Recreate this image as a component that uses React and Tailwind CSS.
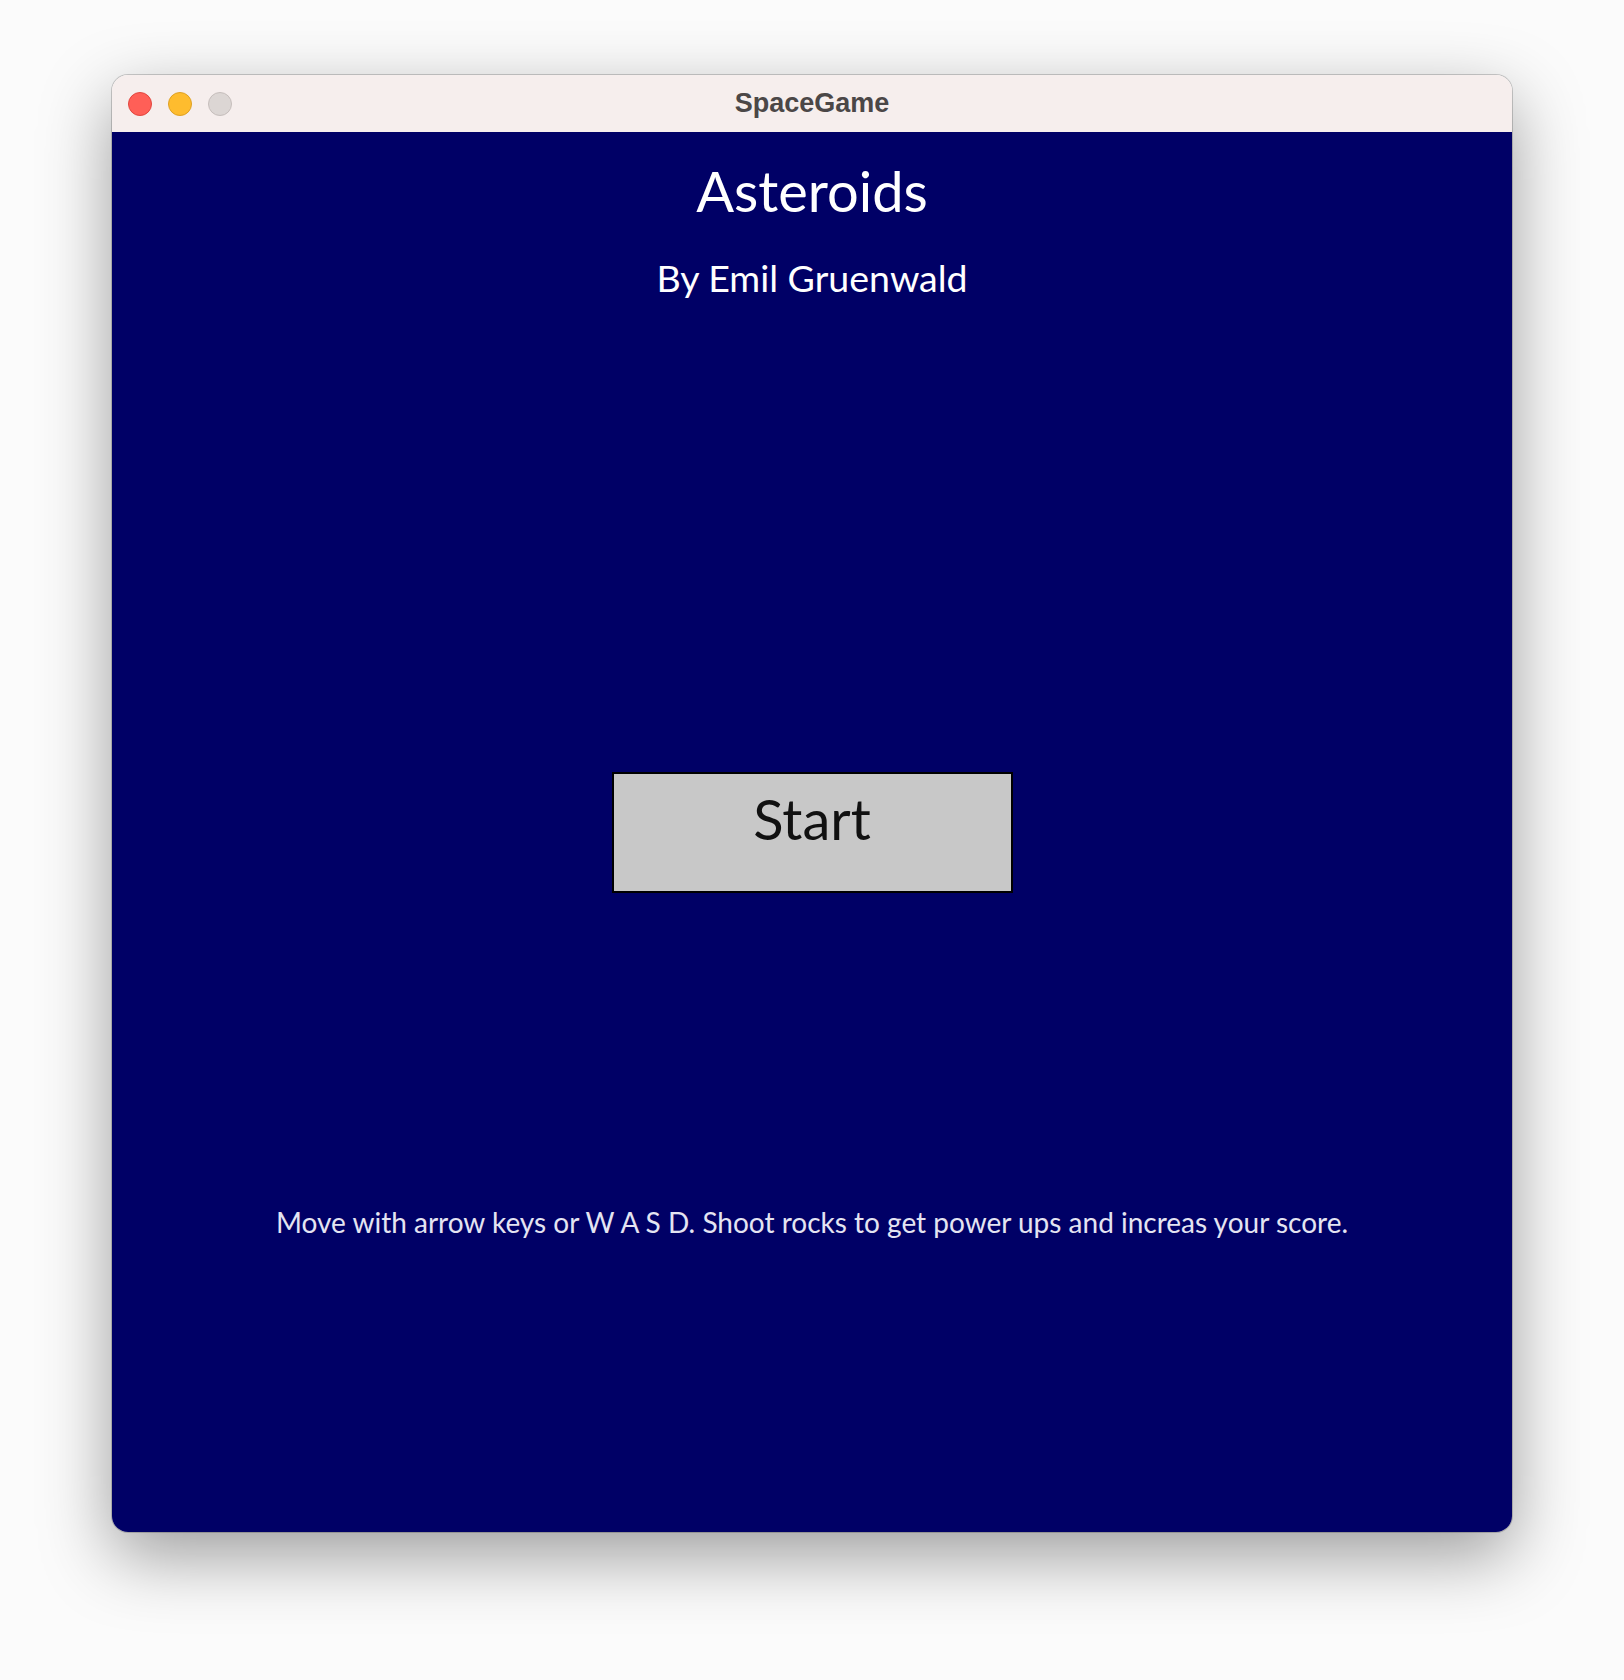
export default function App() {
  return (
    <div className="w-[1624px] h-[1680px] bg-[#fbfbfb] pt-[75px] pl-[112px]">
      {/* Window */}
      <div className="w-[1400px] rounded-[16px] overflow-hidden shadow-[0_24px_70px_rgba(0,0,0,0.38),0_0_0_1px_rgba(0,0,0,0.18)]">
        {/* Title bar */}
        <div className="h-[57px] bg-[#f6eeed] grid grid-cols-[1fr_auto_1fr] items-center">
          <div className="flex items-center gap-[16px] pl-[16px]">
            <span className="w-[24px] h-[24px] rounded-full bg-[#ff5f57] border border-[#e2463f]" />
            <span className="w-[24px] h-[24px] rounded-full bg-[#febc2e] border border-[#dfa123]" />
            <span className="w-[24px] h-[24px] rounded-full bg-[#dcd6d4] border border-[#c6bebc]" />
          </div>
          <div className="text-[27px] leading-none font-bold text-[#4b4747] font-['Liberation_Sans',Arial,sans-serif]">
            SpaceGame
          </div>
          <div />
        </div>

        {/* Game content */}
        <div className="h-[1400px] bg-[#000066] flex flex-col items-center font-['Lato',sans-serif]">
          <h1 className="mt-[31px] text-[56px] leading-none text-white">Asteroids</h1>
          <p className="mt-[40px] text-[37.5px] leading-none text-white">By Emil Gruenwald</p>

          <button className="mt-[475px] w-[401px] h-[121px] border-2 border-black bg-[#c8c8c8] flex justify-center pt-[17px]">
            <span className="text-[56px] leading-none text-[#111]">Start</span>
          </button>

          <p className="mt-[315px] text-[28px] leading-none text-[#e4e4f2]">
            Move with arrow keys or W A S D. Shoot rocks to get power ups and increas your score.
          </p>
        </div>
      </div>
    </div>
  );
}
